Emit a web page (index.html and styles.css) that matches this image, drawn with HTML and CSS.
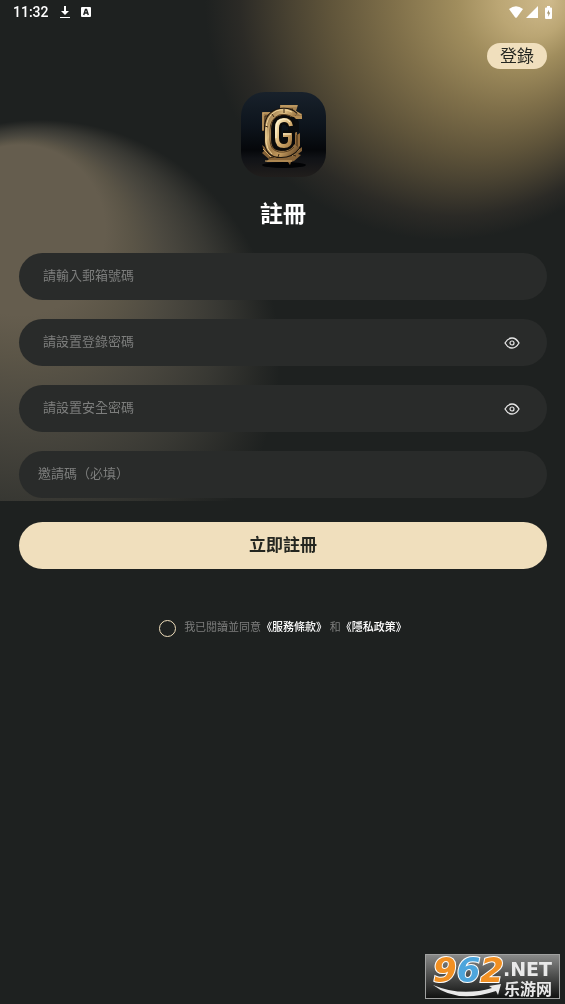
FILE: index.html
```html
<!DOCTYPE html>
<html lang="zh-Hant">

<head>
    <meta charset="utf-8">
    <meta name="viewport" content="width=device-width,initial-scale=1.0">
    <title>註冊</title>
    <link rel="stylesheet" href="styles.css">
</head>

<body>
<div class="page">
    <svg class="glow glow-right" width="360" height="250" viewBox="0 0 360 250">
        <defs>
            <radialGradient id="light-right" gradientUnits="userSpaceOnUse" cx="240" cy="0" r="240" fx="345" fy="0">
                <stop offset="0" stop-color="#cfba8c"/>
                <stop offset=".15" stop-color="#bba674"/>
                <stop offset=".27" stop-color="#a08d5d"/>
                <stop offset=".45" stop-color="#80704a"/>
                <stop offset=".64" stop-color="#5f543a"/>
                <stop offset=".75" stop-color="#4a4332"/>
                <stop offset=".9" stop-color="#2b2a26"/>
                <stop offset="1" stop-color="#1e2120"/>
            </radialGradient>
        </defs>
        <rect width="360" height="250" fill="url(#light-right)"/>
    </svg>
    <svg class="glow glow-left" width="290" height="501" viewBox="0 0 290 501">
        <defs>
            <radialGradient id="light-left" gradientUnits="userSpaceOnUse" cx="40" cy="360" r="240" fx="20" fy="230" fr="85">
                <stop offset="0" stop-color="#655d4e"/>
                <stop offset=".15" stop-color="#5b5547"/>
                <stop offset=".35" stop-color="#4c4940"/>
                <stop offset=".65" stop-color="#383833"/>
                <stop offset=".9" stop-color="#252725"/>
                <stop offset="1" stop-color="#1e2120"/>
            </radialGradient>
        </defs>
        <rect width="290" height="501" fill="url(#light-left)"/>
    </svg>

    <div class="status-bar">
        <div class="status-left">
            <span class="time">11:32</span>
            <svg width="12" height="14" viewBox="0 0 12 14">
                <path d="M5 1h2v5h3L6 10 2 6h3zM1 12h10v1H1z" fill="#fff"/>
            </svg>
            <svg width="10" height="12" viewBox="0 0 10 12">
                <path d="M1 1h8q1 0 1 1v8q0 1-1 1H1q-1 0-1-1V2q0-1 1-1z" fill="#fff"/>
                <path d="M2.700 9L4.500 3.500h1L7.300 9M3.500 7h3" fill="none" stroke="#1e2120" stroke-width="1.400"/>
            </svg>
        </div>
        <div class="status-right">
            <svg width="14" height="12" viewBox="0 0 14 12">
                <path d="M0 3Q7-2.500 14 3L8 11.200Q7 12.400 6 11.200z" fill="#fff"/>
            </svg>
            <svg width="12" height="12" viewBox="0 0 12 12">
                <path d="M12 0v12H0z" fill="#fff"/>
            </svg>
            <svg class="battery" width="7" height="13" viewBox="0 0 7 13">
                <path d="M2 0h3v1.500h1q1 0 1 1V12q0 1-1 1H1q-1 0-1-1V2.500q0-1 1-1h1z" fill="#fff"/>
                <path d="M4 3.800L1.900 7.500h1.400v3.200L5.200 6.600H3.900z" fill="#a3946d"/>
            </svg>
        </div>
    </div>

    <header class="top">
        <button type="button" class="login-btn">登錄</button>
    </header>

    <main class="main">
        <svg class="logo" viewBox="0 0 85 85" role="img" aria-label="G">
            <defs>
                <linearGradient id="night" x1="0" y1="0" x2="0" y2="1">
                    <stop offset="0" stop-color="#18212b"/>
                    <stop offset=".4" stop-color="#0d141c"/>
                    <stop offset=".68" stop-color="#05070a"/>
                    <stop offset=".78" stop-color="#101216"/>
                    <stop offset="1" stop-color="#211e1c"/>
                </linearGradient>
                <linearGradient id="gold" x1="0" y1="0" x2="1" y2="1">
                    <stop offset="0" stop-color="#8f6f43"/>
                    <stop offset=".3" stop-color="#dcbb80"/>
                    <stop offset=".5" stop-color="#a07a47"/>
                    <stop offset=".7" stop-color="#c39a5e"/>
                    <stop offset="1" stop-color="#6b4c2a"/>
                </linearGradient>
                <linearGradient id="plates" x1="0" y1="0" x2="0" y2="1">
                    <stop offset="0" stop-color="#a98654"/>
                    <stop offset=".5" stop-color="#7c5c35"/>
                    <stop offset="1" stop-color="#8a6538"/>
                </linearGradient>
                <linearGradient id="shine" x1="0" y1="0" x2="1" y2="1">
                    <stop offset="0" stop-color="#fff0c4"/>
                    <stop offset=".5" stop-color="#d9b274"/>
                    <stop offset="1" stop-color="#a37a43"/>
                </linearGradient>
            </defs>
            <rect width="85" height="85" rx="24" fill="url(#night)"/>
            <ellipse cx="43" cy="73" rx="22" ry="3" fill="#020305"/>
            <!-- frame plates behind the ring -->
            <path d="M21 20h10v5l-5 14h-5zM39 13h18l-2 6 6 3v5h-9l-5-5-8-3zM21 53l7 5 8 8 14-2 11-9v4l-4 3 3 1-7 6-3 1-1 3-2-3H25l3-3-7-6 2-2z" fill="url(#plates)"/>
            <path d="M22 21h8M22 21v17M40 14h16M54 19l6 4M24 69h27M22 57l8 8M59 57l-8 7" fill="none" stroke="#d1aa6c" stroke-width="1"/>
            <path d="M24 24h4l-4 8zM43 17h9l-2 3zM28 66l5-1M52 63l3 1" fill="none" stroke="#3a2814" stroke-width="1"/>
            <path d="M54 41l2-2v4l3-2v13l-3 3h-2z" fill="#946c3c"/>
            <path d="M56 43v13" stroke="#32220f" stroke-width="1"/>
            <!-- outer ring -->
            <path d="M54 24Q48 19 40 20Q27 22 27 37V48Q27 62 40 62Q50 62 56 54" fill="none" stroke="#1b130b" stroke-width="8"/>
            <path d="M54 24Q48 19 40 20Q27 22 27 37V48Q27 62 40 62Q50 62 56 54" fill="none" stroke="url(#gold)" stroke-width="6"/>
            <path d="M51 20Q43 16 35 19Q25 24 25 38V50Q26 58 31 62" fill="none" stroke="#f0d59d" stroke-width="1"/>
            <path d="M53 26Q46 21 38 23Q29 27 29 38V48Q29 58 38 60Q48 61 53 55" fill="none" stroke="#5a3f20" stroke-width="1"/>
            <path d="M24 34l3 1M31 22l2 3M43 17v4M37 65l1-3" fill="none" stroke="#3d2914" stroke-width="1"/>
            <path d="M47 25h8l3 5v10H47z" fill="#0a0c0f"/>
            <path d="M52 24h9v3h-6z" fill="#b58e56"/>
            <!-- inner letter ribbon -->
            <path d="M50 34Q49 28 43 28Q36 28 36 36V46Q36 54 43 54Q49 54 49 48V43H42" fill="none" stroke="#0b0a09" stroke-width="9"/>
            <path d="M50 34Q49 28 43 28Q36 28 36 36V46Q36 54 43 54Q49 54 49 48V43H42" fill="none" stroke="url(#shine)" stroke-width="4"/>
            <path d="M49 30Q46 26 42 27Q35 28 35 36V46M42 42h8" fill="none" stroke="#fff3cf" stroke-width="1"/>
        </svg>

        <h1 class="title">註冊</h1>

        <form class="form">
            <div class="field">
                <input type="email" aria-label="請輸入郵箱號碼" placeholder="請輸入郵箱號碼">
            </div>
            <div class="field">
                <input type="password" aria-label="請設置登錄密碼" placeholder="請設置登錄密碼">
                <button type="button" class="eye-btn" aria-label="顯示登錄密碼">
                    <svg width="16" height="12" viewBox="0 0 16 12" fill="none" stroke="#e6e6e6">
                        <path d="M1 6C3 2.500 5.200 1 8 1s5 1.500 7 5c-2 3.500-4.200 5-7 5S3 9.500 1 6z" stroke-width="1.300"/>
                        <circle cx="8" cy="6" r="2" stroke-width="1.200"/>
                    </svg>
                </button>
            </div>
            <div class="field">
                <input type="password" aria-label="請設置安全密碼" placeholder="請設置安全密碼">
                <button type="button" class="eye-btn" aria-label="顯示安全密碼">
                    <svg width="16" height="12" viewBox="0 0 16 12" fill="none" stroke="#e6e6e6">
                        <path d="M1 6C3 2.500 5.200 1 8 1s5 1.500 7 5c-2 3.500-4.200 5-7 5S3 9.500 1 6z" stroke-width="1.300"/>
                        <circle cx="8" cy="6" r="2" stroke-width="1.200"/>
                    </svg>
                </button>
            </div>
            <div class="field field-invite">
                <input type="text" aria-label="邀請碼（必填）" placeholder="邀請碼（必填）">
            </div>
            <button type="submit" class="submit-btn">立即註冊</button>
        </form>

        <div class="agree">
            <input type="checkbox" id="agree" class="agree-check">
            <label for="agree">我已閱讀並同意<a href="#">《服務條款》</a> 和<a href="#">《隱私政策》</a></label>
        </div>
    </main>

    <svg class="watermark" width="135" height="45" viewBox="0 0 135 45">
        <defs>
            <linearGradient id="plate" x1="0" y1="0" x2="0" y2="1">
                <stop offset="0" stop-color="#8a8b8a"/>
                <stop offset=".5" stop-color="#4b4c4b"/>
                <stop offset="1" stop-color="#101110"/>
            </linearGradient>
        </defs>
        <rect x=".5" y=".5" width="134" height="44" fill="url(#plate)" stroke="#a0a1a0"/>
        <text class="wm-num" x="8" y="28"><tspan fill="#f19023">9</tspan><tspan fill="#4da5dc">6</tspan><tspan fill="#f19023">2</tspan></text>
        <path d="M8 31Q36 43 67 34l-3-2 12-2-3 11-2-4Q32 50 8 31z" fill="#e9e9e9"/>
        <text class="wm-net" x="78" y="22">.NET</text>
        <text class="wm-name" x="79" y="41">乐游网</text>
    </svg>
</div>
</body>
</html>
```
FILE: styles.css
```css
* {
    margin: 0;
    padding: 0;
    box-sizing: border-box;
}

body {
    background-color: #1e2120;
    font-family: Roboto, "Noto Sans CJK TC", sans-serif;
    color: #fff;
}

button,
input {
    font-family: inherit;
    border: none;
    outline: none;
}

button {
    cursor: pointer;
}

a {
    color: #fff;
    text-decoration: none;
}

svg {
    display: block;
}

.page {
    position: relative;
    display: flex;
    flex-direction: column;
    min-height: 100vh;
    overflow: hidden;
}

/* blurred lights behind the form */
.glow {
    position: absolute;
    top: 0;
    z-index: -1;
}

.glow-right {
    right: 0;
}

.glow-left {
    left: 0;
    mix-blend-mode: lighten;
}

.status-bar {
    display: flex;
    justify-content: space-between;
    align-items: center;
    height: 24px;
    padding: 0 13px;
}

.status-left,
.status-right {
    display: flex;
    align-items: center;
}

.status-left {
    gap: 10px;
}

.status-right {
    gap: 3px;
}

.battery {
    margin-left: 4px;
}

.time {
    font-size: 14px;
    font-weight: 500;
}

.top {
    display: flex;
    justify-content: flex-end;
    padding: 19px 18px 0;
}

.login-btn {
    height: 26px;
    padding: 0 13px;
    border-radius: 13px;
    background-color: #f0dfbd;
    color: #242620;
    font-size: 17px;
    line-height: 26px;
}

.main {
    display: flex;
    flex-direction: column;
    align-items: center;
    flex: 1;
    padding: 23px 18px 0 19px;
}

.logo {
    width: 85px;
    height: 85px;
}

.title {
    margin-top: 21px;
    font-size: 23px;
    line-height: 33px;
    font-weight: 700;
}

.form {
    display: flex;
    flex-direction: column;
    gap: 19px;
    width: 100%;
    margin-top: 22px;
}

.field {
    display: flex;
    align-items: center;
    height: 47px;
    padding: 0 27px 0 24px;
    border-radius: 24px;
    background-color: #292b2a;
}

.field-invite {
    padding-left: 19px;
}

.field input {
    flex: 1;
    min-width: 0;
    height: 45px;
    padding-bottom: 2px;
    background: transparent;
    color: #fff;
    font-size: 13px;
}

.field input::placeholder {
    color: #7d7e7d;
    opacity: 1;
}

.eye-btn {
    background: transparent;
}

.submit-btn {
    height: 47px;
    margin-top: 5px;
    padding-bottom: 4px;
    border-radius: 24px;
    background-color: #f0dfbd;
    color: #242620;
    font-size: 17px;
    font-weight: 700;
}

.agree {
    display: flex;
    align-items: center;
    gap: 8px;
    margin-top: 50px;
    color: #7d7e7d;
    font-size: 11px;
    line-height: 18px;
}

.agree a {
    font-weight: 500;
}

.agree-check {
    appearance: none;
    width: 17px;
    height: 17px;
    border: 1px solid #f0dfbd;
    border-radius: 50%;
}

.agree-check:checked {
    background-color: #f0dfbd;
}

.watermark {
    align-self: flex-end;
    margin: 0 5px 5px 0;
    overflow: visible;
}

.wm-num {
    font-family: "DejaVu Sans", sans-serif;
    font-size: 34px;
    font-weight: 700;
    font-style: italic;
    stroke: #fff;
    stroke-width: 2px;
    paint-order: stroke;
}

.wm-net {
    font-family: "DejaVu Sans", sans-serif;
    font-size: 19px;
    font-weight: 700;
    fill: #e9e9e9;
}

.wm-name {
    font-family: "Liberation Sans", "Noto Sans CJK SC", sans-serif;
    font-size: 16px;
    font-weight: 700;
    fill: #e9e9e9;
}
```
